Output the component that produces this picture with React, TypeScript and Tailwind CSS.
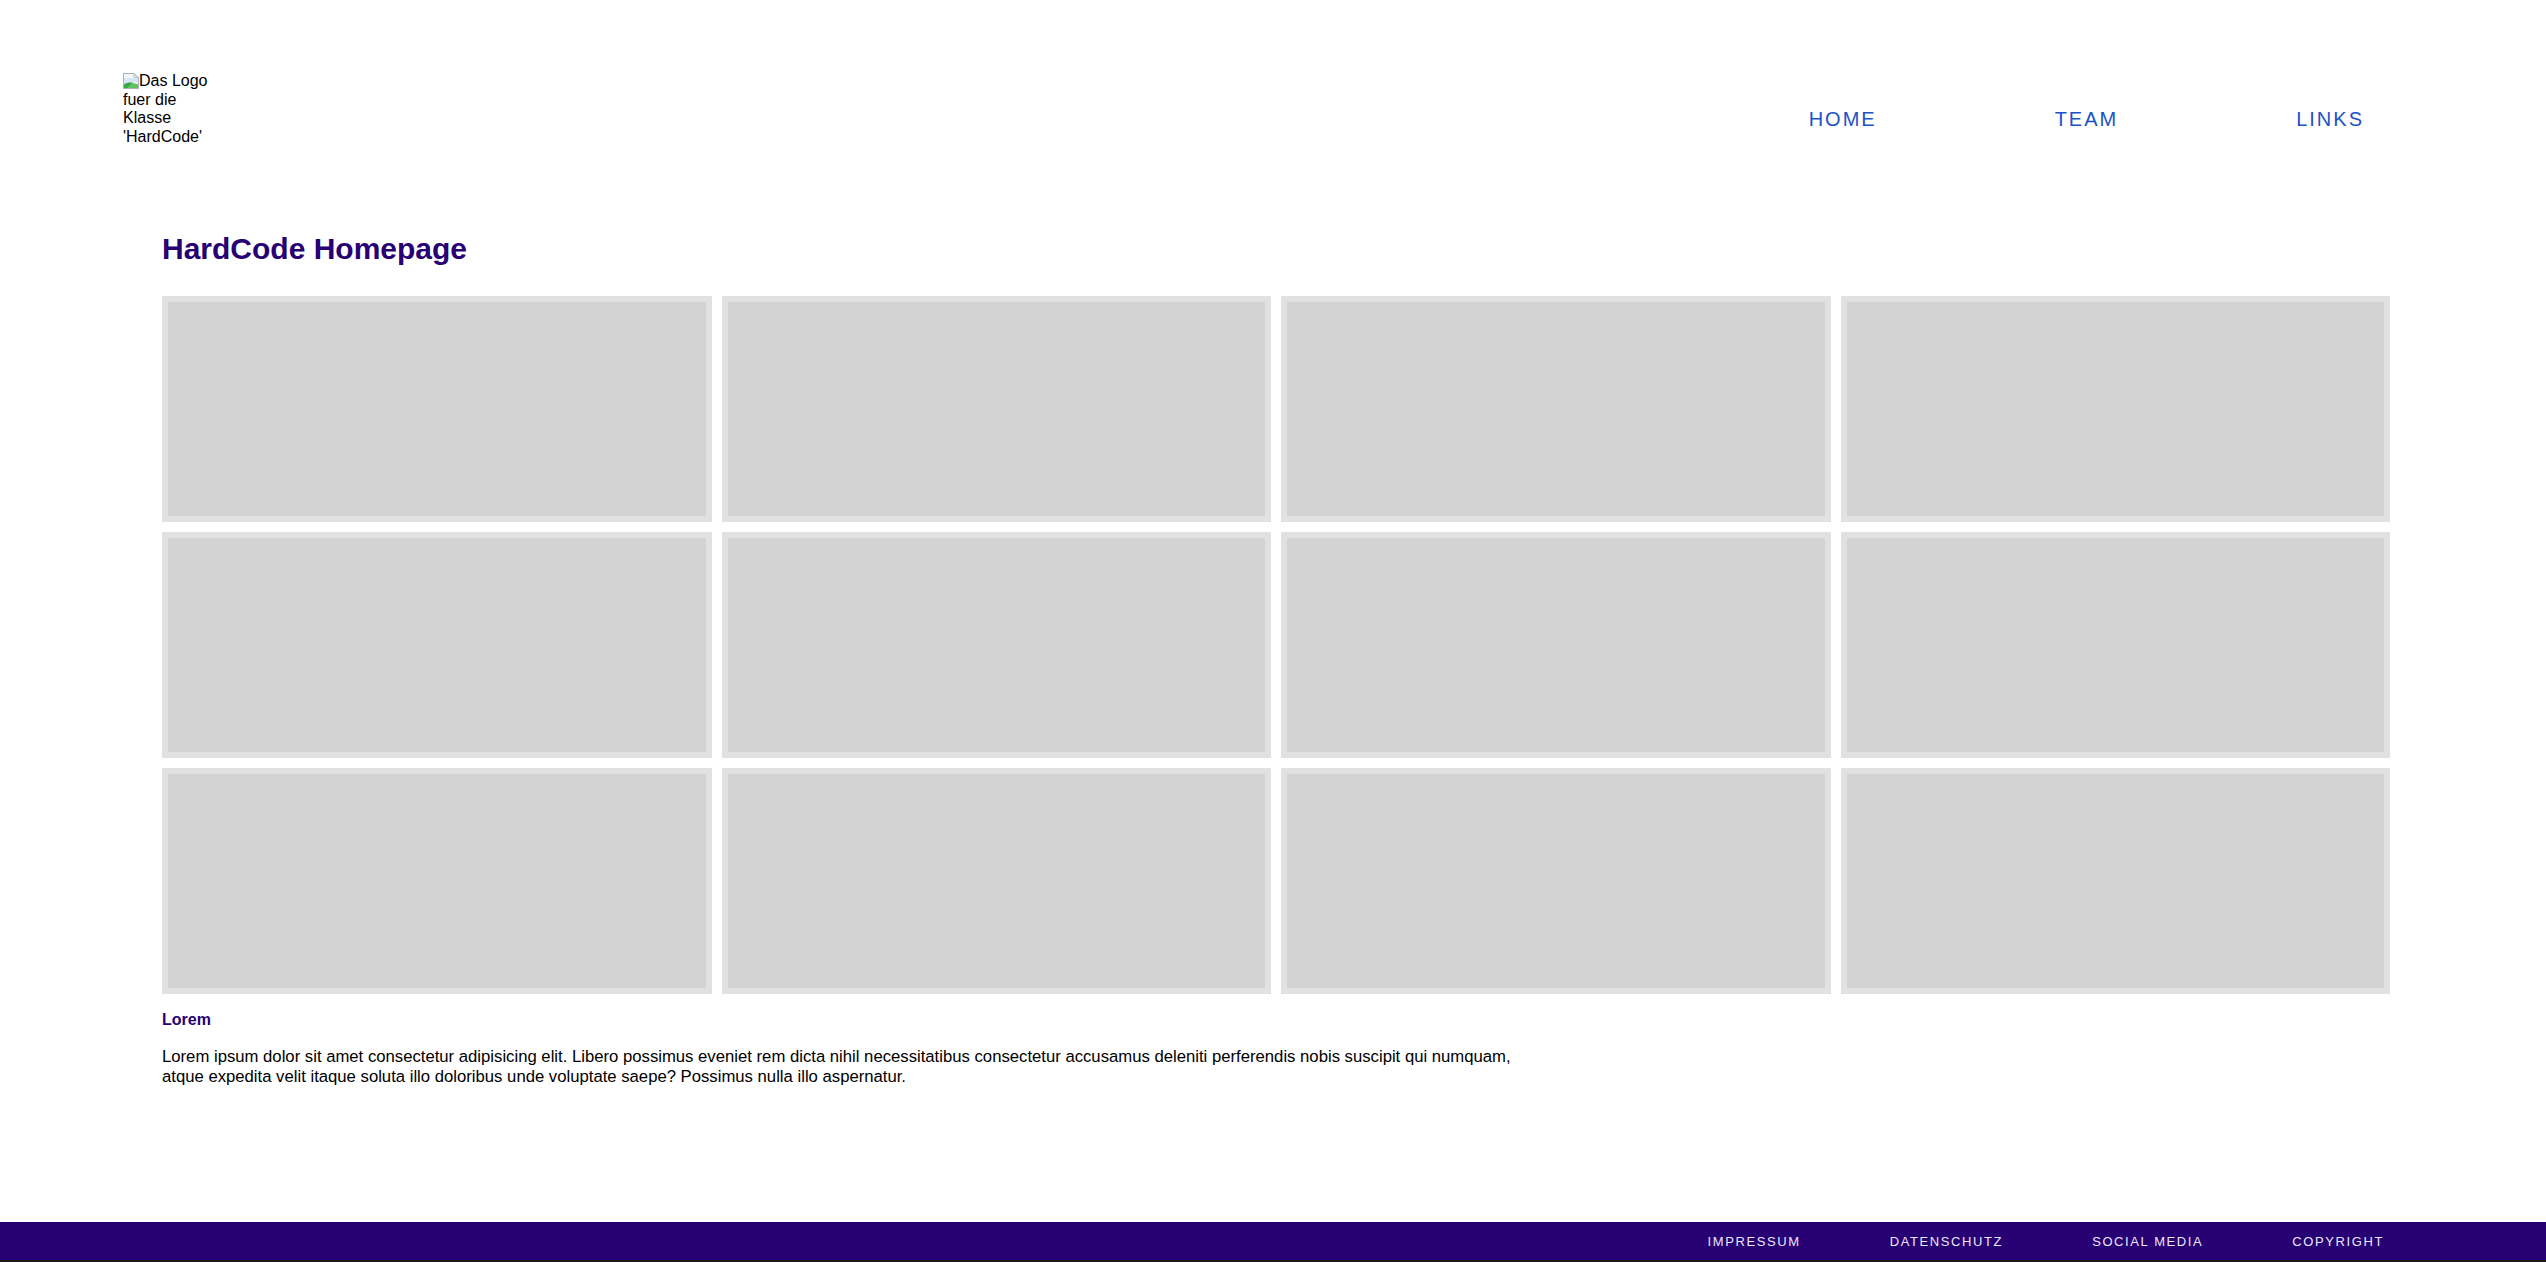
import React from "react";

function BrokenImageIcon() {
  return (
    <svg
      width="16"
      height="16"
      viewBox="0 0 16 16"
      className="inline-block align-[-3px]"
      aria-hidden="true"
    >
      <path d="M0.5 0.5 H11 L15.5 5 V15.5 H0.5 Z" fill="#f4f6f8" stroke="#b9bfc6" />
      <path d="M11 0.5 V5 H15.5" fill="#e3e6ea" stroke="#b9bfc6" />
      <path d="M1 5 H15 V9 L1 12 Z" fill="#d6e6f5" />
      <path d="M1 15 V11.5 C4 9.5 7 9 10 10 L5 15 Z" fill="#3aa845" />
      <path d="M5 15 L10 10 C12 10.5 14 11 15 11.5 V15 Z" fill="#5fc25f" />
      <path d="M0.5 0.5 H11 L15.5 5 V15.5 H0.5 Z" fill="none" stroke="#aab1b9" />
    </svg>
  );
}

export default function App() {
  const cards = Array.from({ length: 12 }, (_, i) => i);
  const footerLinks = ["IMPRESSUM", "DATENSCHUTZ", "SOCIAL MEDIA", "COPYRIGHT"];
  const navLinks = ["HOME", "TEAM", "LINKS"];

  return (
    <div className="flex h-[1262px] flex-col bg-white font-['Liberation_Sans',Arial,sans-serif] text-black">
      <header className="flex items-start justify-between pl-[123px] pr-[182px] pt-[72px]">
        <div className="w-[90px] text-[16px] leading-[18.7px] text-black">
          <BrokenImageIcon />
          Das Logo fuer die Klasse 'HardCode'
        </div>
        <nav className="mt-[35.5px] flex gap-[178px] text-[20px] leading-[23px] tracking-[2px] text-[#1d52c6]">
          {navLinks.map((l) => (
            <a key={l} href="#" className="block">
              {l}
            </a>
          ))}
        </nav>
      </header>

      <main className="pl-[162px] pr-[156px]">
        <h1 className="mt-[84px] text-[30px] font-bold leading-[36px] text-[#270074]">
          HardCode Homepage
        </h1>
        <div className="mt-[29px] grid grid-cols-4 gap-[10px]">
          {cards.map((c) => (
            <div
              key={c}
              className="h-[226px] border-[6px] border-[#e2e1df] bg-[#d3d3d3]"
            />
          ))}
        </div>
        <h2 className="mt-[17.5px] text-[16px] font-bold leading-[normal] text-[#270074]">
          Lorem
        </h2>
        <p className="mt-[18px] max-w-[1375px] text-[16.7px] leading-[19.5px] text-black">
          Lorem ipsum dolor sit amet consectetur adipisicing elit. Libero possimus
          eveniet rem dicta nihil necessitatibus consectetur accusamus deleniti
          perferendis nobis suscipit qui numquam, atque expedita velit itaque soluta
          illo doloribus unde voluptate saepe? Possimus nulla illo aspernatur.
        </p>
      </main>

      <footer className="mt-auto flex h-[40px] items-center justify-end gap-[89px] border-b-2 border-[#1c1c1c] bg-[#270074] pr-[162px] text-[13px] leading-[15px] tracking-[1.6px] text-[#ebe8ff]">
        {footerLinks.map((l) => (
          <a key={l} href="#" className="block">
            {l}
          </a>
        ))}
      </footer>
    </div>
  );
}
